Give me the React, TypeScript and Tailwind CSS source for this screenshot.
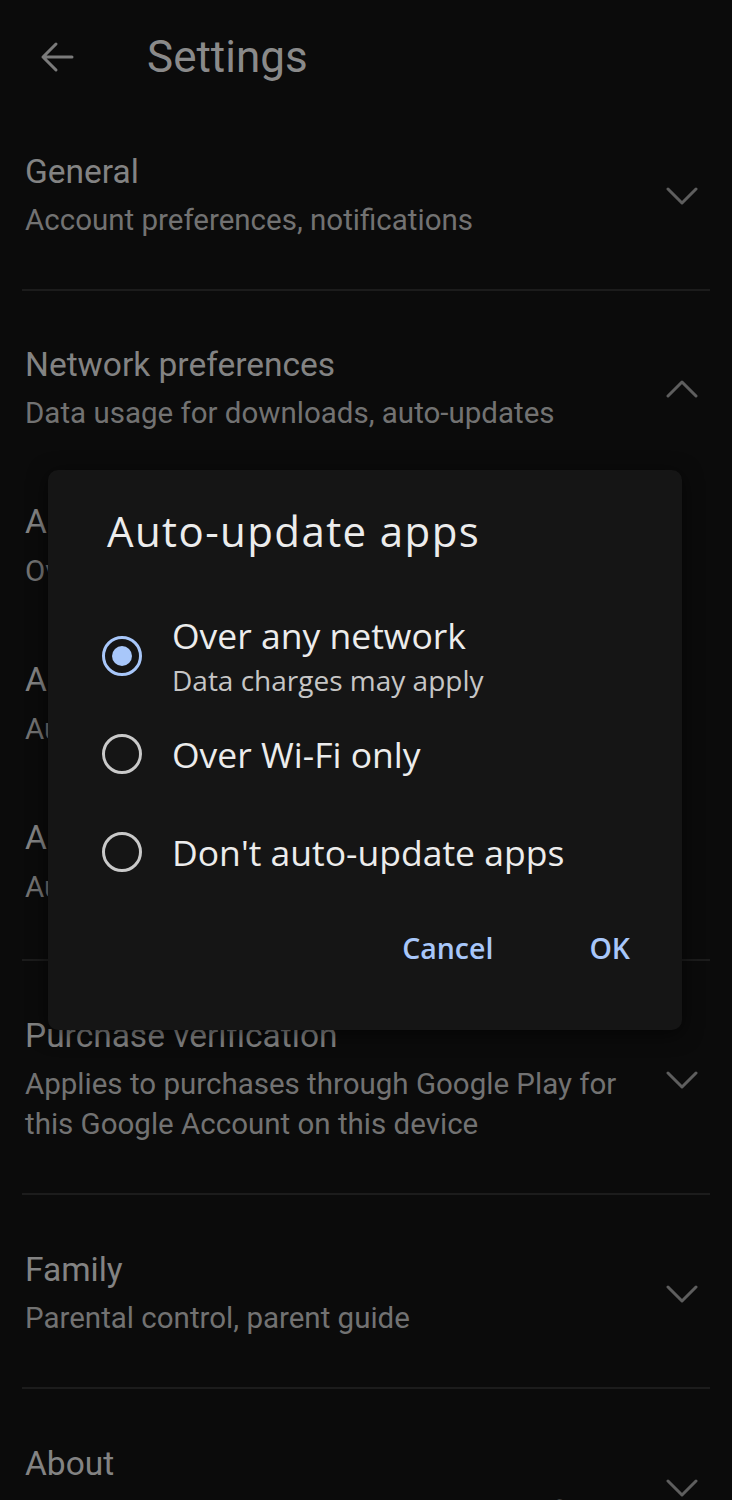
import React from "react";

const Chevron = ({ up = false }: { up?: boolean }) => (
  <svg width="32" height="18" viewBox="0 0 32 18" fill="none" className="shrink-0">
    {up ? (
      <path d="M2 16 L16 2 L30 16" stroke="#5e5e5e" strokeWidth="3" strokeLinecap="round" strokeLinejoin="round" />
    ) : (
      <path d="M2 2 L16 16 L30 2" stroke="#5e5e5e" strokeWidth="3" strokeLinecap="round" strokeLinejoin="round" />
    )}
  </svg>
);

const Divider = () => <div className="mx-[22px] h-[2px] bg-[#1c1c1c]" />;

type RowProps = { title: string; lines: string[]; up?: boolean };

const Row = ({ title, lines, up }: RowProps) => (
  <div className="flex items-center pl-[25px] pr-[34px] pt-[55px] pb-[49px]">
    <div className="flex-1 min-w-0 pr-[24px]">
      <div className="text-[33.5px] leading-[40px] text-[#838383] whitespace-nowrap">{title}</div>
      <div className="mt-[8px] text-[29.5px] leading-[40px] text-[#727272]">
        {lines.map((l) => (
          <div key={l} className="whitespace-nowrap">
            {l}
          </div>
        ))}
      </div>
    </div>
    <Chevron up={up} />
  </div>
);

const SubItem = ({ title, sub }: { title: string; sub: string }) => (
  <div className="pl-[25px] pt-[35px] pb-[34px]">
    <div className="text-[33.5px] leading-[40px] text-[#838383] whitespace-nowrap">{title}</div>
    <div className="mt-[9px] text-[29.5px] leading-[40px] text-[#727272] whitespace-nowrap">{sub}</div>
  </div>
);

const Radio = ({ checked }: { checked?: boolean }) =>
  checked ? (
    <div className="w-[40px] h-[40px] rounded-full border-[3px] border-[#a8c7fa] flex items-center justify-center shrink-0">
      <div className="w-[20px] h-[20px] rounded-full bg-[#a8c7fa]" />
    </div>
  ) : (
    <div className="w-[40px] h-[40px] rounded-full border-[3px] border-[#c9c9c9] shrink-0" />
  );

export default function App() {
  return (
    <div
      className="relative w-[732px] min-h-[1500px] bg-[#0b0b0b] overflow-hidden"
      style={{ fontFamily: "Roboto, 'Liberation Sans', sans-serif" }}
    >
      {/* Header */}
      <div className="flex items-center h-[97px] pt-[17px]">
        <div className="w-[147px] flex pl-[40px]">
          <svg width="34" height="32" viewBox="0 0 34 32" fill="none">
            <path d="M32 16 H3 M16 3 L3 16 L16 29" stroke="#7b7b7b" strokeWidth="3" strokeLinecap="round" strokeLinejoin="round" />
          </svg>
        </div>
        <div className="text-[44px] leading-[48px] text-[#8a8a8a]">Settings</div>
      </div>

      <Row title="General" lines={["Account preferences, notifications"]} />
      <Divider />

      <div className="pb-[18px]">
        <div className="flex items-center pl-[25px] pr-[34px] pt-[54px]">
          <div className="flex-1 min-w-0 pr-[24px]">
            <div className="text-[33.5px] leading-[40px] text-[#838383]">Network preferences</div>
            <div className="mt-[8px] text-[29.5px] leading-[40px] text-[#727272] whitespace-nowrap">
              Data usage for downloads, auto-updates
            </div>
          </div>
          <Chevron up />
        </div>
        <div className="h-[34px]" />
        <SubItem title="App download preference" sub="Over any network" />
        <SubItem title="Auto-update apps" sub="Auto-update apps over any network" />
        <SubItem title="Auto-play videos" sub="Auto-play videos over any network" />
      </div>
      <Divider />

      <Row
        title="Purchase verification"
        lines={["Applies to purchases through Google Play for", "this Google Account on this device"]}
      />
      <Divider />
      <Row title="Family" lines={["Parental control, parent guide"]} />
      <Divider />
      <Row title="About" lines={["Play Store version, build and device certification"]} />

      {/* Dialog */}
      <div
        className="absolute left-[48px] top-[470px] w-[634px] h-[560px] rounded-[10px] bg-[#151515] shadow-[0_4px_20px_rgba(0,0,0,0.6)]"
        style={{ fontFamily: "'Open Sans', Roboto, sans-serif" }}
      >
        <div className="pl-[59px] pt-[37px] text-[42px] leading-[48px] tracking-[1.4px] text-[#ececec] whitespace-nowrap">
          Auto-update apps
        </div>
        <div className="mt-[52px]">
          <div className="flex items-center h-[98px] pl-[54px]">
            <Radio checked />
            <div className="ml-[30px]">
              <div className="text-[35.5px] leading-[42px] text-[#ececec] whitespace-nowrap">Over any network</div>
              <div className="mt-[6px] text-[28px] leading-[36px] text-[#c6c6c6] whitespace-nowrap">Data charges may apply</div>
            </div>
          </div>
          <div className="flex items-center h-[98px] pl-[54px]">
            <Radio />
            <div className="ml-[30px] text-[35.5px] leading-[42px] text-[#ececec] whitespace-nowrap">Over Wi-Fi only</div>
          </div>
          <div className="flex items-center h-[98px] pl-[54px]">
            <Radio />
            <div className="ml-[30px] text-[35.5px] leading-[42px] text-[#ececec] whitespace-nowrap">Don't auto-update apps</div>
          </div>
        </div>
        <div className="mt-[27px] flex justify-end gap-[96px] pr-[52px] text-[28.5px] leading-[40px] font-semibold text-[#a8c7fa]">
          <span>Cancel</span>
          <span>OK</span>
        </div>
      </div>
    </div>
  );
}
